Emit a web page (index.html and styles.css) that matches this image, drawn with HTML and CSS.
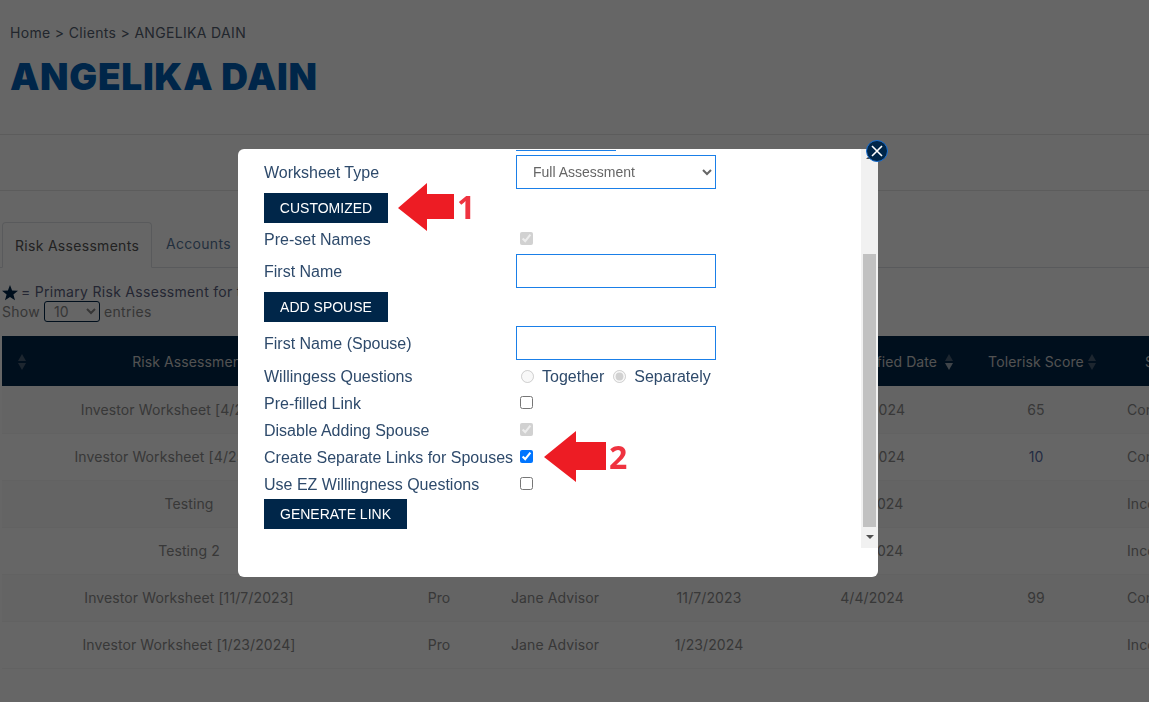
FILE: index.html
```html
<!DOCTYPE html>
<html lang="en">
<head>
    <meta charset="UTF-8">
    <title>ANGELIKA DAIN - Clients</title>
    <link rel="stylesheet" href="styles.css">
</head>
<body>
    <div class="page">
        <div class="page-head">
            <div class="breadcrumb">Home &gt; Clients &gt; ANGELIKA DAIN</div>
            <h1>ANGELIKA DAIN</h1>
        </div>
        <div class="toolbar"></div>

        <div class="tabs">
            <div class="tab active">Risk Assessments</div>
            <div class="tab">Accounts</div>
        </div>

        <div class="legend">
            <svg class="star" viewBox="0 0 16 16" width="16" height="16"><path d="M8 0l2.1 5.6 5.9.2-4.6 3.7 1.6 5.8L8 12l-5 3.3 1.6-5.8L0 5.8l5.9-.2z"/></svg>
            = Primary Risk Assessment for this client
        </div>
        <div class="show-entries">
            Show
            <select class="entries-select"><option>10</option></select>
            entries
        </div>

        <table class="grid">
            <colgroup>
                <col class="c-name"><col class="c-type"><col class="c-advisor"><col class="c-created"><col class="c-modified"><col class="c-score"><col class="c-status">
            </colgroup>
            <thead>
                <tr>
                    <th class="first">
                        <svg class="sort sort-first" viewBox="0 0 10 18" width="10" height="18"><path class="up" d="M1 8l4-7 4 7z"/><path class="up" d="M1 10h8l-4 7z"/></svg>
                        Risk Assessment
                    </th>
                    <th>Type</th>
                    <th>Advisor</th>
                    <th>Created Date</th>
                    <th class="modified">Modified Date
                        <svg class="sort sort-modified" viewBox="0 0 10 18" width="10" height="18"><path class="up" d="M1 8l4-7 4 7z"/><path class="down" d="M1 10h8l-4 7z"/></svg>
                    </th>
                    <th class="score">Tolerisk Score
                        <svg class="sort sort-score" viewBox="0 0 10 18" width="10" height="18"><path class="up" d="M1 8l4-7 4 7z"/><path class="up" d="M1 10h8l-4 7z"/></svg>
                    </th>
                    <th class="status">Status</th>
                </tr>
            </thead>
            <tbody>
                <tr><td>Investor Worksheet [4/25/2024]</td><td>Pro</td><td>Jane Advisor</td><td>4/25/2024</td><td>4/11/2024</td><td class="score">65</td><td class="status">Completed</td></tr>
                <tr><td>Investor Worksheet [4/25/2024] 2</td><td>Pro</td><td>Jane Advisor</td><td>4/25/2024</td><td>4/11/2024</td><td class="score link">10</td><td class="status">Completed</td></tr>
                <tr><td>Testing</td><td>Pro</td><td>Jane Advisor</td><td>1/4/2024</td><td>1/11/2024</td><td class="score"></td><td class="status">Incomplete</td></tr>
                <tr><td>Testing 2</td><td>Pro</td><td>Jane Advisor</td><td>1/4/2024</td><td>1/11/2024</td><td class="score"></td><td class="status">Incomplete</td></tr>
                <tr><td>Investor Worksheet [11/7/2023]</td><td>Pro</td><td>Jane Advisor</td><td>11/7/2023</td><td>4/4/2024</td><td class="score">99</td><td class="status">Completed</td></tr>
                <tr><td>Investor Worksheet [1/23/2024]</td><td>Pro</td><td>Jane Advisor</td><td>1/23/2024</td><td></td><td class="score"></td><td class="status">Incomplete</td></tr>
            </tbody>
        </table>
    </div>

    <div class="overlay"></div>

    <div class="modal">
        <div class="modal-body">
            <div class="modal-content">
                <div class="clipped-input"></div>
                <div class="field field-input">
                    <label>Worksheet Type</label>
                    <select class="form-select"><option>Full Assessment</option></select>
                </div>
                <button class="btn">CUSTOMIZED</button>
                <div class="field">
                    <label>Pre-set Names</label>
                    <input type="checkbox" checked disabled>
                </div>
                <div class="field field-input">
                    <label>First Name</label>
                    <input type="text" class="form-input">
                </div>
                <button class="btn btn-spouse">ADD SPOUSE</button>
                <div class="field field-input">
                    <label>First Name (Spouse)</label>
                    <input type="text" class="form-input">
                </div>
                <div class="field">
                    <label>Willingess Questions</label>
                    <input type="radio" name="willingness" disabled><span class="radio-label">Together</span>
                    <input type="radio" name="willingness" checked disabled><span class="radio-label">Separately</span>
                </div>
                <div class="field">
                    <label>Pre-filled Link</label>
                    <input type="checkbox">
                </div>
                <div class="field">
                    <label>Disable Adding Spouse</label>
                    <input type="checkbox" checked disabled>
                </div>
                <div class="field">
                    <label>Create Separate Links for Spouses</label>
                    <input type="checkbox" checked>
                </div>
                <div class="field">
                    <label>Use EZ Willingness Questions</label>
                    <input type="checkbox">
                </div>
                <button class="btn btn-generate">GENERATE LINK</button>
            </div>
            <div class="scrollbar">
                <div class="scroll-track"><div class="scroll-thumb"></div></div>
                <div class="scroll-down"></div>
            </div>
        </div>

        <button class="close-btn">
            <svg viewBox="0 0 12 12" width="12" height="12"><path d="M1 1l10 10M11 1L1 11" stroke="#fff" stroke-width="1.6" fill="none"/></svg>
        </button>

        <!-- annotation arrows added on the screenshot -->
        <svg class="arrow arrow-1" viewBox="0 0 57 48" width="57" height="48"><path d="M0 25L29 0v11h27v25H29v12z"/></svg>
        <span class="arrow-num num-1">1</span>
        <svg class="arrow arrow-2" viewBox="0 0 63 52" width="63" height="52"><path d="M0 26L32 0v11h30v28H32v12z"/></svg>
        <span class="arrow-num num-2">2</span>
    </div>
</body>
</html>
```

FILE: styles.css
```css
* {
    box-sizing: border-box;
}

html, body {
    margin: 0;
    height: 100%;
    overflow: hidden;
}

body {
    font-family: Inter, "Open Sans", sans-serif;
    background: #fff;
    color: #002649;
}

.page {
    position: relative;
    width: 1149px;
    height: 702px;
    overflow: hidden;
}

.page-head {
    height: 134px;
    padding: 24px 10px 0;
}

.breadcrumb {
    font-size: 14px;
    line-height: 18px;
    letter-spacing: 0.33px;
    color: #555f70;
}

h1 {
    margin: 12px 0 0;
    font-size: 37px;
    line-height: 46px;
    font-weight: 900;
    letter-spacing: 0.7px;
    color: #005fb6;
}

.toolbar {
    height: 57px;
    border-top: 1px solid #e6e6e6;
    border-bottom: 1px solid #e6e6e6;
}

.tabs {
    display: flex;
    margin-top: 31px;
    padding-left: 2px;
    height: 46px;
    border-bottom: 1px solid #dee2e6;
}

.tab {
    padding: 0 14px;
    font-size: 14px;
    line-height: 44px;
    letter-spacing: 0.3px;
    white-space: nowrap;
    color: #1a4a7a;
    opacity: 0.75;
}

.tab.active {
    width: 150px;
    height: 46px;
    padding: 0 12px;
    color: #555;
    opacity: 1;
    line-height: 45px;
    border: 1px solid #dee2e6;
    border-bottom-color: #fff;
    border-radius: 4px 4px 0 0;
}

.legend {
    margin-top: 14px;
    padding-left: 2px;
    display: flex;
    align-items: center;
    gap: 3px;
    height: 18px;
    font-size: 14px;
    letter-spacing: 0.3px;
    color: #5a5f80;
}

.star {
    fill: #002649;
    margin-top: 3px;
}

.show-entries {
    padding-left: 2px;
    height: 22px;
    display: flex;
    align-items: center;
    gap: 4px;
    font-size: 14px;
    letter-spacing: 0.3px;
    color: #888;
}

.entries-select {
    width: 56px;
    height: 21px;
    padding-left: 5px;
    font-family: inherit;
    font-size: 14px;
    color: #888;
    background: #fff;
    border: 1px solid #002649;
    border-radius: 3px;
}

.grid {
    margin: 14px 0 0 2px;
    width: 1147px;
    table-layout: fixed;
    border-collapse: collapse;
    font-size: 14px;
    letter-spacing: 0.1px;
}

.c-name { width: 374px; }
.c-type { width: 126px; }
.c-advisor { width: 106px; }
.c-created { width: 202px; }
.c-modified { width: 124px; }
.c-score { width: 174px; }
.c-status { width: 41px; }

.grid th {
    position: relative;
    height: 50px;
    padding: 0;
    background: #002649;
    color: #ccc;
    font-weight: 400;
    text-align: center;
    white-space: nowrap;
}

.grid td {
    height: 47px;
    padding: 0;
    text-align: center;
    color: #8c8c8c;
    white-space: nowrap;
    border-bottom: 1px solid #f4f4f4;
}

.grid tbody tr:nth-child(odd) td {
    background: #fafafa;
}

.grid th.modified {
    z-index: 1;
    padding-left: 33px;
    text-align: left;
}

.grid .score {
    padding-left: 30px;
}

.grid .link {
    color: #5a6fa8;
}

.grid .status {
    padding-left: 19px;
    text-align: left;
    overflow: hidden;
}

.grid th.status {
    padding-left: 37px;
}

.sort {
    position: absolute;
    top: 17px;
}

.sort .up {
    fill: #4a6076;
}

.sort .down {
    fill: #a0adb9;
}

.sort-first {
    left: 15px;
}

.sort-modified {
    right: -20px;
}

.sort-score {
    right: 11px;
}

.overlay {
    position: fixed;
    inset: 0;
    z-index: 2;
    background: rgba(0, 0, 0, 0.6);
}

.modal {
    position: absolute;
    left: 238px;
    top: 149px;
    z-index: 3;
    width: 640px;
    height: 428px;
    background: #fff;
    border-radius: 6px;
    font-family: "Liberation Sans", Arial, sans-serif;
    color: #2e4a6b;
}

.modal-body {
    display: flex;
    height: 399px;
}

.modal-content {
    flex: 1;
    padding-left: 26px;
    overflow: hidden;
}

.clipped-input {
    width: 100px;
    height: 2px;
    margin: 0 0 4px 252px;
    border-bottom: 1px solid #1a7fe8;
}

.field {
    display: flex;
    align-items: center;
    min-height: 27px;
    font-size: 16px;
}

.field-input {
    margin-top: 1px;
    margin-bottom: 3px;
}

.field-input label {
    padding-top: 2px;
}

.field label {
    width: 252px;
    flex-shrink: 0;
}

.field input[type="checkbox"] {
    margin: 0 0 2px 4px;
}

.field input[type="radio"] {
    margin: 0 8px 0 5px;
}

.radio-label {
    margin-right: 4px;
}

.form-select {
    width: 200px;
    height: 34px;
    padding-left: 12px;
    font-family: inherit;
    font-size: 14px;
    color: #666;
    background: #fff;
    border: 1px solid #1a7fe8;
    border-radius: 0;
}

.form-input {
    width: 200px;
    height: 34px;
    border: 1px solid #1a7fe8;
    border-radius: 0;
}

.btn {
    display: block;
    width: 124px;
    height: 30px;
    margin: 4px 0 3px;
    padding: 0;
    background: #002649;
    color: #fff;
    border: none;
    font-family: inherit;
    font-size: 14px;
}

.btn-spouse {
    margin-bottom: 4px;
}

.btn-generate {
    width: 143px;
    margin-top: 1px;
}

.scrollbar {
    position: relative;
    width: 17px;
    display: flex;
    flex-direction: column;
    background: #f1f1f1;
}

.scrollbar::before {
    content: "";
    position: absolute;
    left: 5px;
    top: 6px;
    border-left: 4px solid transparent;
    border-right: 4px solid transparent;
    border-bottom: 4px solid #505050;
}

.scroll-track {
    flex: 1;
    padding-top: 105px;
    padding-left: 2px;
}

.scroll-thumb {
    width: 13px;
    height: 273px;
    background: #c1c1c1;
}

.scroll-down {
    position: relative;
    height: 21px;
}

.scroll-down::after {
    content: "";
    position: absolute;
    left: 5px;
    top: 8px;
    border-left: 4px solid transparent;
    border-right: 4px solid transparent;
    border-top: 4px solid #505050;
}

.close-btn {
    position: absolute;
    right: -10px;
    top: -9px;
    display: flex;
    align-items: center;
    justify-content: center;
    width: 22px;
    height: 22px;
    padding: 0;
    background: #002649;
    border: 1px solid #1a6fd0;
    border-radius: 50%;
}

.arrow {
    position: absolute;
    fill: #ed1c24;
}

.arrow-1 {
    left: 160px;
    top: 34px;
}

.arrow-2 {
    left: 306px;
    top: 282px;
}

.arrow-num {
    position: absolute;
    font-family: "Open Sans", sans-serif;
    font-weight: 700;
    font-size: 32px;
    line-height: 40px;
    color: #ef3340;
}

.num-1 {
    left: 219px;
    top: 38px;
}

.num-2 {
    left: 371px;
    top: 288px;
}
```
